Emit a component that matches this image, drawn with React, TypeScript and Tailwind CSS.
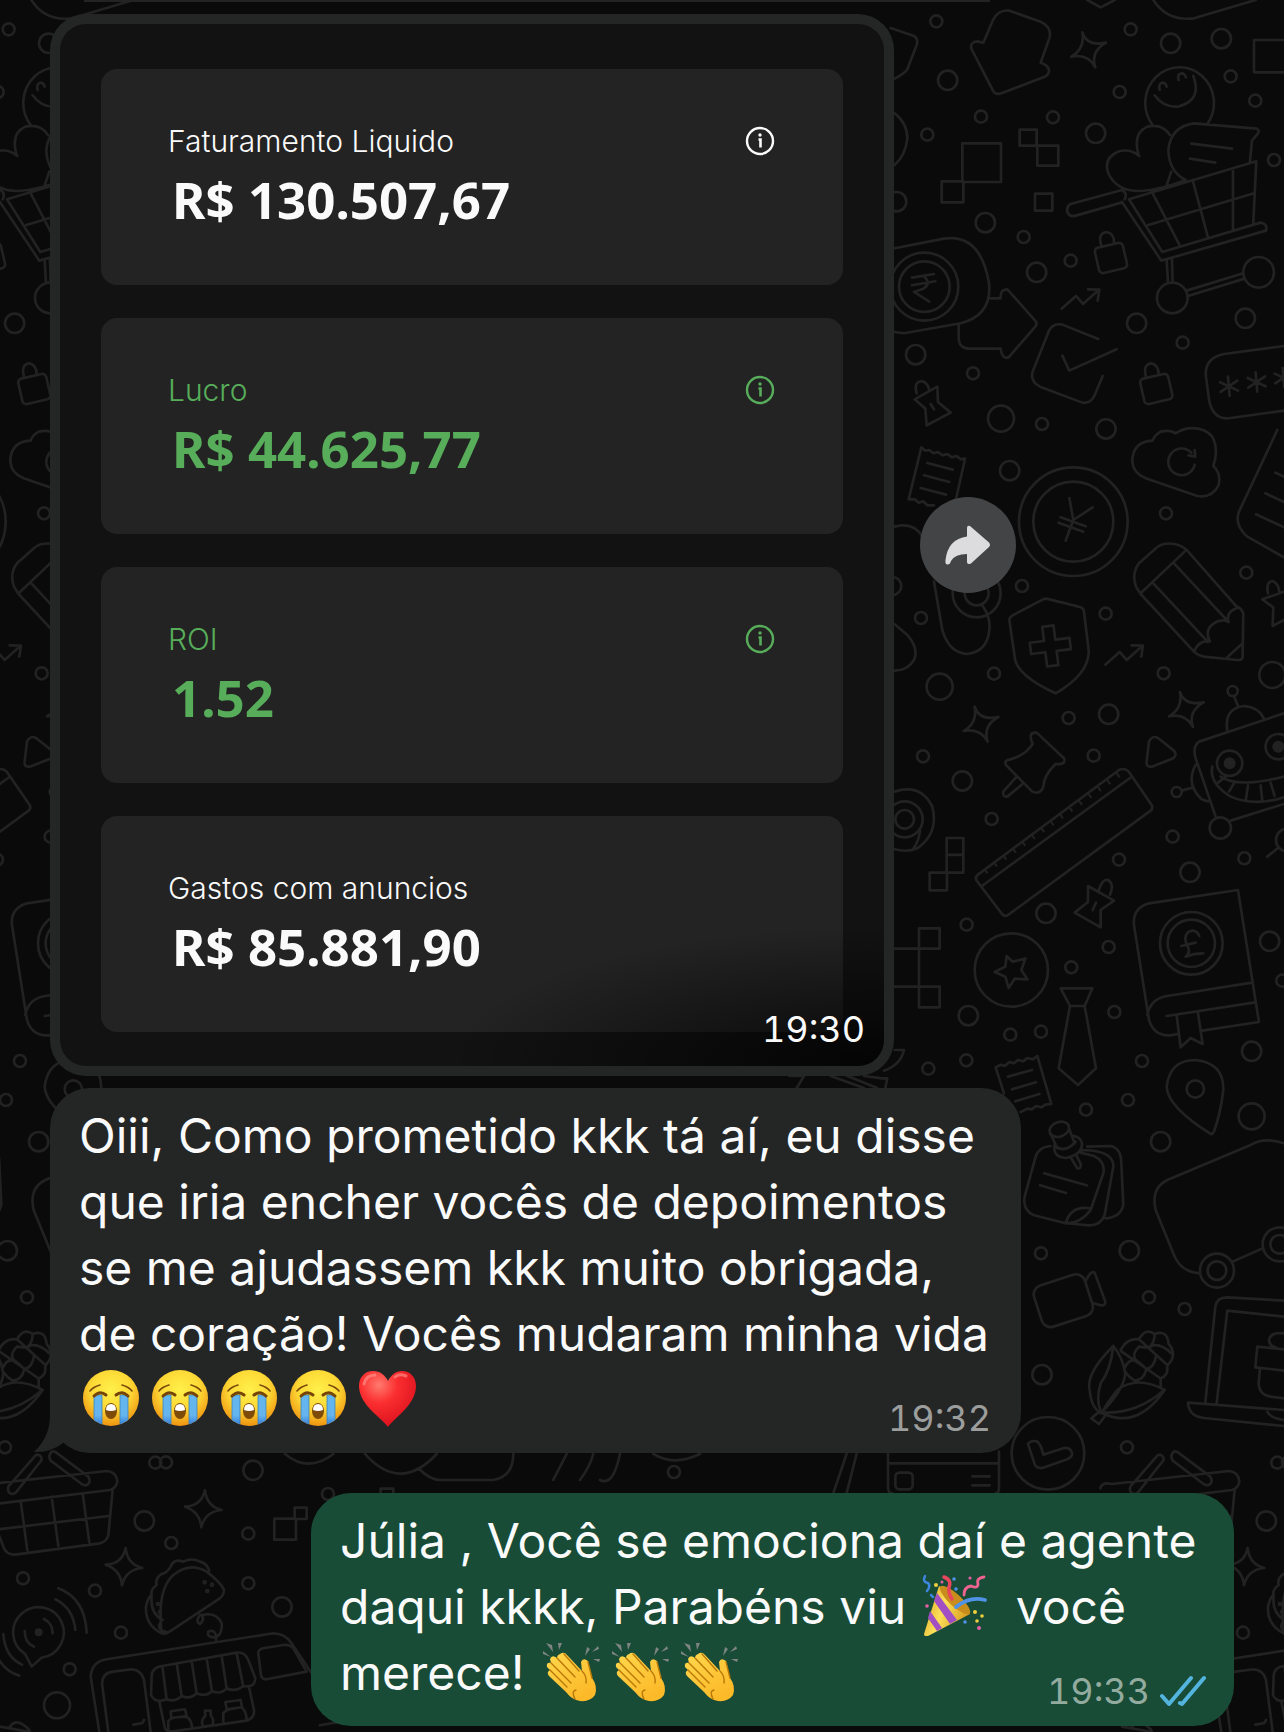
import type { ReactNode } from 'react'

type Dot = [number, number, number]

interface DoodleProps {
  origin: string
  dots: Dot[]
  d: string
  children?: ReactNode
}

// One block of the wallpaper, drawn at three times its final size
function Doodle({ origin, dots, d, children }: DoodleProps) {
  return (
    <g transform={`translate(${origin}) scale(0.3333)`}>
      {dots.map(([cx, cy, r], i) => (
        <circle key={i} cx={cx} cy={cy} r={r} />
      ))}
      <path d={d} />
      {children}
    </g>
  )
}

const SPARK = 'M595 97Q608 140 666 128Q618 155 634 202Q612 160 562 170Q604 146 595 97Z'
const SPARK_TALL = 'M615 570Q620 620 665 630Q615 635 604 682Q600 635 555 620Q605 618 615 570Z'
const TREND = 'M533 926L576 888L597 912L644 870M612 868L646 869L641 902'

const shopDots: Dot[] = [
  [157, 64, 18], [740, 88, 18], [1040, 229, 18], [1114, 302, 18], [707, 276, 18], [291, 350, 18],
  [507, 352, 18], [130, 404, 18], [1170, 480, 18], [419, 711, 18], [560, 782, 18], [267, 1120, 18],
  [896, 1028, 18], [474, 1272, 18], [191, 241, 29], [860, 130, 29], [1012, 116, 29], [635, 400, 29],
  [304, 668, 29], [458, 817, 29], [95, 1064, 29], [758, 970, 29], [1084, 955, 29], [38, 605, 29],
  [666, 1287, 29], [351, 1256, 39], [865, 894, 46], [1124, 817, 46], [121, 860, 102], [121, 860, 76],
]

const shopPath = [
  'M298 128L326 62Q342 28 376 32L470 65Q503 80 497 112L470 188Q500 198 494 218Q490 228 478 232L352 280Q334 286 327 272L262 146Q258 126 280 124Z',
  'M808 0Q850 65 930 55L1115 0M610 0L650 22L692 0M1200 120H1110V217H1200',
  'M20 84L90 108Q104 115 98 135L70 208Q66 218 32 236M32 340Q70 370 70 415Q65 465 32 495',
  // smiley
  'M806 375A103 107 0 1 1 970 372M812 286Q840 325 885 319Q955 300 928 228M827 270Q822 248 838 248Q846 250 848 260M884 240Q878 220 896 220Q902 222 906 232',
  // heart and speech bubble
  'M766 468Q740 445 705 454Q655 475 674 522Q700 575 770 573Q830 570 905 540M764 466Q745 400 790 380Q835 370 858 405M848 556L862 515',
  'M905 540Q855 515 853 450Q860 380 930 370L1118 386Q1128 392 1122 400L1104 422L1098 484M922 431L1044 446M918 476L994 488',
  // cart
  'M735 598L1117 484L1108 668M805 578L888 738M926 540L972 712M1047 505V690M793 675L1110 580M735 598L835 756L1130 668Q1152 672 1146 692L832 782L714 606',
  'M714 570L560 612Q545 622 551 638Q558 652 575 647L712 608M714 570Q732 580 722 598M848 780L852 848M864 778L866 848M908 872L1078 820M912 888L1082 836',
  'M235 430h116v116h-116zM173 544h65v63h-65zM407 389h51v48h-51zM460 437h63v60h-63zM453 581h52v51h-52z',
  'M652 736Q640 700 668 696Q690 700 690 726M786 1130Q776 1094 802 1090Q824 1096 824 1122',
  // wallet and rupee
  'M32 745L180 716Q290 700 315 850Q325 945 230 970L60 1000L32 996M84 833L150 822M84 856L154 844M118 828Q145 850 118 866L90 876L136 905',
  'M318 895H350Q348 868 370 868L456 965Q460 972 454 980L374 1072Q355 1080 350 1046H260Q224 1048 224 1010V972',
  'M643 1017L535 974Q508 968 495 992L446 1115Q438 1145 468 1160L595 1208Q620 1212 632 1186L656 1128M535 1067L556 1112L698 1048',
  'M98 1180Q88 1142 116 1144Q132 1150 136 1172M92 1198L160 1160L162 1206L200 1238L128 1276L124 1226ZM140 1212L150 1228',
  // password field
  'M1200 1038L1020 1062Q960 1075 966 1130L976 1205Q990 1262 1040 1254L1200 1232',
  'M1032 1130L1037 1188M1008 1147L1062 1172M1010 1176L1060 1142M1115 1117L1120 1175M1091 1134L1145 1159M1093 1163L1143 1129M1196 1104L1201 1162M1172 1121L1226 1146M1174 1150L1224 1116',
  SPARK,
  TREND,
].join('')

const toolDots: Dot[] = [
  [846, 250, 18], [1087, 428, 18], [665, 551, 18], [414, 468, 18], [111, 564, 18], [330, 731, 18],
  [839, 730, 18], [554, 864, 18], [629, 977, 18], [117, 979, 18], [323, 1167, 18], [866, 1220, 18],
  [705, 1289, 18], [1081, 1285, 18], [1046, 783, 15], [878, 1086, 15], [377, 122, 29], [167, 770, 39],
  [1165, 735, 39], [674, 853, 29], [235, 1053, 29], [25, 468, 27], [568, 275, 163], [568, 275, 120],
  [1009, 1194, 32], [1037, 1000, 38], [1183, 950, 38], [62, 1168, 54], [62, 1168, 28], [278, 490, 72],
  [278, 490, 36], [1210, 1230, 34],
]

const toolPath = [
  // receipt
  'M112 52L124 62L136 60L148 70L162 66L176 76L190 72L204 82L218 78L230 88L243 86L212 226M112 52L74 208L92 208L104 218L118 214L130 226L150 226M130 99L206 119M120 136L196 156M110 174L186 194',
  'M556 204L568 270L626 232M568 270L545 332M530 262L605 289M524 278L598 305',
  // cloud
  'M806 32Q745 35 745 95Q748 130 785 145L940 198Q985 205 1004 165Q1012 130 988 108Q1005 60 985 20Q960 -10 910 -5Q890 0 874 10Q860 -2 830 5Q812 15 806 32M932 104A40 40 0 1 1 922 68M932 60L934 80L914 76',
  'M1180 0L1065 245Q1050 285 1090 320L1200 382M1174 128L1200 140M1144 190L1200 216M1116 253L1200 292',
  // pencil
  'M908 360Q880 335 840 342Q825 345 810 360L765 400Q742 430 756 470L770 492L930 665Q940 676 960 680L1060 690Q1076 690 1076 680L1078 550Q1070 532 1058 530L908 360M770 490L905 362M808 460L972 636M870 400L1034 576',
  'M930 665Q945 630 978 634Q960 600 990 580Q1010 565 1034 576Q1024 545 1062 533M1030 682L1076 640',
  // shield
  'M485 506Q515 512 590 532Q600 536 600 545L614 660Q618 730 515 790Q395 735 392 680L376 570Q376 562 386 556L470 512Q480 506 485 506Z',
  // push pin and play
  'M446 942Q430 905 458 908L540 985Q548 1005 515 1002Q480 1035 478 1070Q470 1095 445 1085L366 1005Q358 990 380 988Q425 975 446 942ZM398 1040L358 1085Q355 1102 370 1100L418 1060',
  'M795 935Q805 915 822 924L870 962Q880 975 868 985L805 1010Q785 1012 788 995Z',
  // ruler
  'M705 1020Q722 1012 735 1026L803 1125Q808 1135 800 1142L372 1455Q362 1462 354 1452L278 1352Q272 1342 282 1334ZM738 1044L294 1368',
  // robot
  'M1050 798L1062 828M1030 902Q1020 835 1080 828Q1125 832 1140 866M1200 850L945 935Q925 950 935 985L995 1160M1040 1172L1200 1122M935 1005Q905 1060 950 1105Q960 1112 972 1114M893 1082L922 1074',
  'M985 1010Q975 1060 1040 1100Q1110 1130 1200 1102M1010 1040Q1060 1075 1200 1040M1000 1060L1025 1040M1035 1085L1050 1060M1086 1108L1092 1066M1135 1112L1130 1066M1172 1098L1160 1058',
  'M32 1085Q110 1060 145 1130Q165 1210 100 1255Q70 1268 32 1258M108 1200Q105 1235 88 1256M188 1224h50v104h-50zM188 1275h50',
  'M32 290Q90 275 115 320M150 455L175 600Q195 670 250 672Q310 665 316 600Q320 560 296 528M32 583L70 615Q105 655 90 690Q70 722 32 722M1150 1280L1182 1254',
  'M1152 490Q1145 452 1168 454Q1184 462 1186 485M1200 485L1135 508L1168 532L1166 588L1200 570',
].join('')

const officeDots: Dot[] = [
  [248, 194, 18], [674, 261, 18], [562, 322, 18], [691, 456, 18], [379, 524, 18], [471, 515, 18],
  [247, 601, 18], [133, 626, 18], [774, 603, 18], [732, 720, 18], [606, 749, 18], [471, 1180, 18],
  [1195, 362, 18], [486, 160, 29], [918, 37, 29], [1157, 244, 29], [253, 467, 29], [1103, 574, 29],
  [830, 845, 29], [736, 1172, 29], [1103, 769, 39], [382, 330, 110], [922, 250, 94], [922, 250, 71],
  [934, 687, 26], [999, 1232, 51], [999, 1232, 28], [1187, 1153, 51], [1187, 1153, 28],
]

const officePath = [
  'M612 78L690 122L650 150L650 202L572 158L612 126ZM644 92Q655 55 672 60Q692 72 678 104M636 128L626 150',
  'M368 288L386 305L424 296L412 330L430 358L392 356L374 384L364 350L332 336L364 320Z',
  'M137 38h52v53h-52zM105 205h62v61h-62zM105 380h62v62h-62zM105 266V380M32 266H105M32 380H105',
  // tie
  'M530 385H625L602 438H558ZM558 438L524 625L582 675L636 625L602 438',
  // book
  'M882 522L860 526Q810 530 795 480L750 195Q745 145 795 130L1062 90L1125 486L955 512M790 465Q800 415 850 408L1104 368M848 468L1114 427M878 466L890 562L920 534L956 552L942 458',
  'M946 228Q935 205 915 215Q895 230 912 262Q920 280 905 290Q930 280 958 280M892 258L935 248',
  'M980 822Q850 740 848 680Q858 600 934 600Q1020 608 1018 690Q1010 760 990 815Q985 824 980 822Z',
  'M360 700L335 622L350 614L362 618L376 606L390 610L402 600L418 604L430 594L446 598L460 588L502 732L484 734L472 742L456 738L444 748L430 746L410 756M372 650L444 630M384 688L456 667M394 724L466 702',
  // sticky notes
  'M500 858Q465 860 455 890L422 1010Q415 1050 450 1066L545 1090Q590 1090 620 1050L658 940Q665 905 630 888L590 878M500 822L520 865M556 808L572 850M512 855Q505 890 545 894Q595 885 594 850Q590 832 570 828M516 860Q545 880 575 845M560 892L580 925Q592 928 590 912L576 884',
  'M480 940L608 976M468 976L546 999M545 1090Q560 1035 620 1045M590 870Q690 870 688 920L662 1065Q650 1098 610 1096L550 1090M610 860L680 858Q712 865 712 910L718 1035Q710 1072 665 1075',
  'M1200 850Q1140 830 1100 855L850 960Q800 985 815 1050L870 1185Q890 1235 945 1240M1046 1205L1134 1166',
  'M32 570H60Q50 615 0 632M0 655L10 655L4 684',
  // pieces under the left side of the image bubble
  'M-284 648H-240L-262 684M-160 648L-60 684M-110 648L-20 684M-60 648L0 656',
].join('')

const farmDots: Dot[] = [
  [795, 172, 18], [902, 207, 18], [729, 622, 18], [1180, 668, 18], [474, 404, 29], [492, 640, 109],
]

const farmPath = [
  'M605 124Q620 90 632 98L664 185Q664 198 650 196L628 190',
  'M432 612Q440 600 458 604Q470 610 478 644L540 624Q560 622 564 640Q566 650 550 658L475 684Q458 686 452 672Z',
  // corn
  'M688 318Q605 400 617 450Q620 500 650 520Q720 450 724 400Q715 350 688 318M688 318Q680 390 650 430Q635 480 650 512M842 450Q760 405 700 450Q660 500 655 520Q760 570 842 450M660 518Q760 520 838 452M650 512L622 535L645 552L665 525',
  'M710 330Q730 292 765 298Q785 262 812 282Q850 268 854 312Q875 335 862 362Q848 378 850 384Q852 405 830 416V442M712 334L828 414M765 298L850 375M812 282Q812 305 800 318Q830 308 862 340M722 384Q735 355 758 362Q740 345 765 320Q790 325 804 318M758 362Q790 385 786 392Q778 420 752 422Q735 412 722 394M816 348Q812 380 788 388',
  // laptop and gift
  'M1200 182L1030 172Q998 172 994 200L964 488M1200 230L1030 212L998 490M1200 510L912 488Q915 530 960 534L1200 558M1150 515Q1160 535 1200 540',
  'M1200 328L1120 320L1114 382L1200 392M1128 385L1124 430Q1125 465 1160 470L1200 475M1200 280Q1160 275 1155 300Q1158 320 1175 322',
  'M12 635V740Q12 760 25 760M345 635V745Q345 760 335 760M12 670H345M265 709h52M265 736h52',
].join('')

const streetDots: Dot[] = [
  [498, 487, 18], [745, 701, 18], [514, 729, 18], [69, 835, 18], [285, 872, 18], [745, 850, 18],
  [363, 998, 18], [209, 1108, 18], [984, 582, 18], [2022, 516, 18], [759, 511, 29], [433, 663, 29],
  [846, 921, 29], [171, 1216, 39], [614, 847, 3], [636, 854, 3], [622, 873, 3], [474, 912, 3], [480, 936, 3],
]

const streetPath = [
  // basket
  'M108 465L25 560Q20 580 38 582Q46 580 50 575L125 480Q125 462 108 465M148 472Q150 450 165 455L265 530Q275 550 258 556Q250 556 245 552L152 482Z',
  'M-65 565Q-60 545 -30 552L320 513Q350 515 352 545Q348 565 330 570L0 610L-50 614M338 570L325 705Q320 725 300 730L45 764Q20 764 12 745L-40 612M62 602L82 752M155 590L175 738M248 580L268 728M-20 690L325 648',
  SPARK_TALL,
  'M823 656h65v63h-65zM884 623h36v34h-36zM1142 566h38v30h-38z',
  // taco
  'M485 1000Q470 870 520 825Q570 785 620 815Q665 850 672 870Q672 888 655 898L510 994Q495 1004 485 1000Q435 975 438 920Q445 890 455 885Q450 870 470 855Q465 835 485 822Q500 820 512 800Q520 775 550 785Q575 772 600 785Q620 790 628 812M455 890Q450 940 488 960M480 970Q470 990 500 996',
  'M600 945Q585 965 600 972Q615 960 605 945Q650 935 665 970Q668 1010 640 1012Q620 1010 625 995Q650 985 648 1020',
  // voice waves
  'M75 1062L95 1100L125 1073A76 76 0 1 0 75 1062M132 957Q158 970 158 1000M74 993Q75 1030 102 1040M166 898Q220 925 226 990M175 865Q255 895 260 998M10 1003Q15 1070 66 1094M-20 1040Q0 1110 58 1127',
  // food truck
  'M298 1296L272 1130Q275 1085 320 1078L820 1000Q855 1000 875 1030L935 1120M325 1296L306 1150Q308 1118 340 1115L395 1108Q425 1110 432 1140L452 1296M400 1274L425 1270Q430 1266 432 1260',
  'M487 1098Q455 1102 455 1130L453 1185Q466 1212 500 1198Q524 1208 545 1188Q570 1200 590 1180Q616 1192 636 1174Q662 1184 680 1166Q708 1176 730 1158Q765 1165 766 1135L745 1080Q735 1055 710 1058L487 1098L500 1198M530 1090L545 1188M575 1083L590 1180M620 1076L636 1174M665 1068L680 1166M710 1060L730 1160',
  'M478 1205L495 1285Q500 1296 520 1294L740 1262Q765 1255 762 1230L748 1165M775 1060Q775 1048 790 1045L850 1035Q870 1033 880 1045L920 1115L800 1138Q785 1138 783 1125ZM512 1234L555 1228L560 1248L514 1254ZM505 1290V1264Q510 1254 530 1252L560 1250Q574 1260 576 1280M676 1206L722 1200L726 1222L680 1228ZM670 1268V1240Q676 1230 690 1228L724 1222Q738 1230 740 1258M615 1232H632L632 1245Q645 1262 636 1276L610 1280Q600 1262 616 1248Z',
  'M0 1280L90 1296M30 1280Q50 1250 88 1290',
  // pieces between the bubbles
  'M855 462Q925 520 1000 462M1095 462Q1200 580 1310 462M1255 505Q1290 540 1320 540H1480Q1540 530 1540 462M1660 540L1700 462M1740 540Q1770 500 1780 462M1800 540Q1840 560 1860 462M1960 462Q2020 500 2100 462M2500 580L2540 462M2540 580L2570 462',
  'M960 1276L1040 1262',
].join('')

function Wallpaper() {
  return (
    <svg className="absolute inset-0 h-full w-full" aria-hidden="true">
      <defs>
        <g id="doodles" fill="none" stroke="#222222" strokeWidth="8" strokeLinecap="round" strokeLinejoin="round">
          <Doodle origin="884 0" dots={shopDots} d={shopPath}>
            <rect x="638" y="735" width="86" height="78" rx="12" transform="rotate(-13 681 774)" />
            <rect x="774" y="1128" width="86" height="78" rx="12" transform="rotate(-13 817 1167)" />
          </Doodle>
          <Doodle origin="884 430" dots={toolDots} d={toolPath}>
            <path d="M482 588h34v43h43v34h-43v43h-34v-43h-43v-34h43z" transform="rotate(-7 499 648)" />
            <path d={SPARK} transform="translate(-323 733)" />
            <path d={SPARK} transform="translate(293 689)" />
            <path d={TREND} transform="translate(131 -222)" />
            <path d="M705 1034L300 1328" strokeWidth="16" strokeDasharray="6 29" strokeLinecap="butt" />
            <circle cx="1037" cy="1000" r="14" fill="#222222" />
            <circle cx="1183" cy="950" r="14" fill="#222222" />
          </Doodle>
          <Doodle origin="884 860" dots={officeDots} d={officePath}>
            <ellipse cx="526" cy="808" rx="30" ry="22" transform="rotate(-20 526 808)" />
          </Doodle>
          <Doodle origin="884 1240" dots={farmDots} d={farmPath}>
            <rect x="458" y="117" width="160" height="130" rx="28" transform="rotate(-18 538 182)" />
            <rect x="34" y="698" width="52" height="50" rx="12" />
          </Doodle>
          <Doodle origin="0 1300" dots={streetDots} d={streetPath}>
            <path d={SPARK_TALL} transform="translate(-238 174)" />
            <circle cx="116" cy="997" r="8" fill="#222222" />
          </Doodle>
        </g>
      </defs>
      <use href="#doodles" />
      <use href="#doodles" x="-1122" />
      <use href="#doodles" x="1122" />
    </svg>
  )
}

function EmojiDefs() {
  return (
    <svg className="absolute h-0 w-0" aria-hidden="true">
      <defs>
        <radialGradient id="face" cx="0.5" cy="0.35" r="0.65">
          <stop offset="0" stopColor="#fff04a" />
          <stop offset="0.55" stopColor="#fdd835" />
          <stop offset="1" stopColor="#ee9411" />
        </radialGradient>
        <linearGradient id="tear" x1="0" y1="0" x2="0" y2="1">
          <stop offset="0" stopColor="#62b6ee" />
          <stop offset="0.6" stopColor="#66b4ee" />
          <stop offset="1" stopColor="#1c66cf" />
        </linearGradient>
        <radialGradient id="heart" cx="0.35" cy="0.25" r="0.8">
          <stop offset="0" stopColor="#ff7a6e" />
          <stop offset="0.4" stopColor="#fb2f30" />
          <stop offset="1" stopColor="#d90f1c" />
        </radialGradient>
        <linearGradient id="hand" x1="0" y1="0" x2="0.6" y2="1">
          <stop offset="0" stopColor="#ffd84e" />
          <stop offset="1" stopColor="#fcb928" />
        </linearGradient>
        <linearGradient id="cone" x1="0" y1="0" x2="1" y2="0.4">
          <stop offset="0" stopColor="#d99a1c" />
          <stop offset="0.5" stopColor="#fbe05a" />
          <stop offset="1" stopColor="#dca021" />
        </linearGradient>
        <clipPath id="face-clip">
          <circle cx="32" cy="31" r="28" />
        </clipPath>
      </defs>
    </svg>
  )
}

function Emoji({ label, children }: { label: string; children: ReactNode }) {
  return (
    <svg viewBox="0 0 69 62" role="img" aria-label={label} className="inline-block h-[62px] w-[69px] align-[-12px]">
      {children}
    </svg>
  )
}

function Crying() {
  return (
    <Emoji label="chorando">
      <circle cx="32" cy="31" r="28" fill="url(#face)" />
      <g clipPath="url(#face-clip)" fill="url(#tear)" stroke="#3d83b9" strokeWidth="0.8">
        <path d="M15 28h8v34h-8zM41 28h8v34h-8z" />
      </g>
      <path d="M11 24Q14 20 21 18M53 24Q50 20 43 18" fill="none" stroke="#7a4a0c" strokeWidth="1.6" strokeLinecap="round" />
      <path d="M15 29Q21 23 27 28M37 28Q43 23 49 29" fill="none" stroke="#754406" strokeWidth="3" strokeLinecap="round" />
      <ellipse cx="32" cy="44" rx="6" ry="8" fill="#7f4b08" />
      <path d="M27 43Q27 37 32 37T37 43Q32 45 27 43Z" fill="#fff" />
    </Emoji>
  )
}

function Heart() {
  return (
    <Emoji label="coração">
      <path
        d="M33 60C27 51 4 38 4 19C4 10 10 4 18 4C25 4 30 8 33 14C36 8 41 4 47 4C55 4 61 10 61 19C61 38 39 51 33 60Z"
        fill="url(#heart)"
      />
      <path d="M9 17Q11 8 20 8M40 10Q44 6 51 9" fill="none" stroke="#ff9a90" strokeWidth="3" strokeLinecap="round" opacity="0.6" />
    </Emoji>
  )
}

function PartyPopper() {
  return (
    <Emoji label="festa">
      <path d="M4 60L19 12Q31 20 50 40L8 62Q4 63 4 60Z" fill="url(#cone)" />
      <path d="M14 27L30 50L37 46L17 19ZM8 44L17 57L22 54L10 37Z" fill="#a24fc4" />
      <ellipse cx="35" cy="26" rx="20" ry="6" transform="rotate(43 35 26)" fill="#c98d1c" />
      <path d="M5 2Q2 8 8 9Q11 12 7 17M11 21L13 23" fill="none" stroke="#3f86e0" strokeWidth="2.5" strokeLinecap="round" />
      <path d="M24 3Q32 6 29 13Q28 19 32 25" fill="none" stroke="#e8465c" strokeWidth="3.5" strokeLinecap="round" />
      <path d="M64 3Q56 4 58 10Q58 15 51 12Q44 13 44 21" fill="none" stroke="#ef6390" strokeWidth="2.8" strokeLinecap="round" />
      <path d="M36 33Q50 22 65 26" fill="none" stroke="#4f92e6" strokeWidth="3.8" strokeLinecap="round" />
      <g fill="#e45fa3">
        <circle cx="22" cy="8" r="1.5" />
        <circle cx="50" cy="4" r="1.6" />
        <circle cx="7" cy="32" r="1.8" />
        <circle cx="59" cy="54" r="2" />
      </g>
      <g fill="#f0cf3c">
        <circle cx="16" cy="11" r="2" />
        <circle cx="55" cy="38" r="2" />
        <circle cx="62" cy="42" r="1.8" />
        <circle cx="57" cy="47" r="1.8" />
      </g>
      <g fill="#4f92e6">
        <circle cx="34" cy="5" r="1.8" />
        <circle cx="36" cy="15" r="1.8" />
        <circle cx="45" cy="48" r="1.8" />
      </g>
    </Emoji>
  )
}

function Clap() {
  return (
    <Emoji label="palmas">
      <g fill="#7f8583">
        <path d="M8 3L14 5L15 12ZM5 11L13 17L5 14ZM20 3L24 3L21 10ZM47 16L49 7L52 9ZM54 12L60 6L61 9ZM55 19L62 19L61 22Z" />
      </g>
      <path
        d="M22 14Q26 11 29 15L44 31L43 22Q45 17 50 21L54 38Q60 46 57 55Q52 62 42 61Q34 60 28 52L11 36Q8 32 12 30L9 27Q8 22 13 23L12 19Q14 14 19 18Q19 15 22 14Z"
        fill="url(#hand)"
      />
      <path
        d="M19 18L37 37M13 23L33 43M12 30L29 47M26 14L41 31M50 22L54 38M44 31Q49 36 48 43M37 59Q33 51 38 50"
        fill="none"
        stroke="#b97808"
        strokeWidth="1.4"
        strokeLinecap="round"
      />
    </Emoji>
  )
}

function InfoIcon() {
  return (
    <svg viewBox="0 0 30 30" className="h-[30px] w-[30px]" fill="none" stroke="currentColor" aria-hidden="true">
      <circle cx="15" cy="15" r="13" strokeWidth="2.4" />
      <path d="M13.500 13.500H15.500V21.500" strokeWidth="2.600" />
      <circle cx="15" cy="9" r="1.700" fill="currentColor" stroke="none" />
    </svg>
  )
}

interface Metric {
  label: string
  value: string
  positive?: boolean
  info?: boolean
}

const metrics: Metric[] = [
  { label: 'Faturamento Liquido', value: 'R$ 130.507,67', info: true },
  { label: 'Lucro', value: 'R$ 44.625,77', positive: true, info: true },
  { label: 'ROI', value: '1.52', positive: true, info: true },
  { label: 'Gastos com anuncios', value: 'R$ 85.881,90' },
]

function MetricCard({ label, value, positive, info }: Metric) {
  return (
    <div
      className={`flex h-[216px] items-start justify-between rounded-2xl bg-[#232323] pt-[52px] pr-[68px] pl-[67px] ${
        positive ? 'text-[#57ad5a]' : 'text-[#fafafa]'
      }`}
    >
      <dl>
        <dt className="text-[30px] leading-[40px] font-light">{label}</dt>
        <dd className="pl-1 font-['Noto_Sans',sans-serif] text-[51px] leading-[76px] font-bold">{value}</dd>
      </dl>
      {info && (
        <button type="button" aria-label={`Sobre ${label}`} className="mt-[5px]">
          <InfoIcon />
        </button>
      )}
    </div>
  )
}

export default function App() {
  return (
    <main className="relative min-h-screen overflow-hidden bg-[#0a0a0a] font-['Inter',sans-serif] text-[#fafafa]">
      <Wallpaper />
      <EmojiDefs />
      <div className="relative flex flex-col">
        <div className="ml-[84px] h-[2px] w-[906px] max-w-full bg-[#222424]" />

        <div className="mt-3 ml-[50px] flex items-center gap-[26px]">
          <article className="w-[844px] rounded-[36px] bg-[#242626] p-[10px]">
            <div className="relative flex flex-col gap-[33px] overflow-hidden rounded-[26px] bg-[#121212] px-[41px] pt-[45px] pb-[34px]">
              {metrics.map((metric) => (
                <MetricCard key={metric.label} {...metric} />
              ))}
              <div className="absolute inset-0 bg-[radial-gradient(ellipse_440px_140px_at_100%_100%,rgba(0,0,0,0.8),transparent)]" />
              <time className="absolute right-[19px] bottom-[15px] text-[36px] leading-[44px] tabular-nums">19:30</time>
            </div>
          </article>
          <button
            type="button"
            aria-label="Encaminhar"
            className="flex h-24 w-24 items-center justify-center rounded-full bg-[#434446]"
          >
            <svg viewBox="0 0 46 40" className="h-10 w-[46px]" fill="#dcdcde" aria-hidden="true">
              <path d="M22 3Q22 0 25 1L44 17.500Q46 20 44 22L26 38.500Q22 40 22 37V29Q10 29 6 36Q5 40 2 39.500Q0 39 0.500 35Q3 14 22 11.500Z" />
            </svg>
          </button>
        </div>

        <article className="relative mt-3 ml-[50px] w-[971px] max-w-full rounded-[40px] bg-[#242626] px-[29px] pt-[15px] pb-5">
          <svg viewBox="0 0 50 60" className="absolute bottom-0 -left-[16px] h-[60px] w-[50px]" fill="#242626" aria-hidden="true">
            <path d="M16 0V22Q16 44 0 59Q16 60 29 50L50 40V0Z" />
          </svg>
          <p className="relative text-[48px] leading-[66px] whitespace-nowrap">
            Oiii, Como prometido kkk tá aí, eu disse
            <br />
            que iria encher vocês de depoimentos
            <br />
            se me ajudassem kkk muito obrigada,
            <br />
            de coração! Vocês mudaram minha vida
            <br />
            <Crying />
            <Crying />
            <Crying />
            <Crying />
            <Heart />
          </p>
          <time className="absolute right-[30px] bottom-[13px] text-[36px] leading-[44px] text-[#9c9d9d] tabular-nums">19:32</time>
        </article>

        <article className="relative mt-10 mr-[50px] w-[923px] max-w-full self-end rounded-[40px] bg-[#184c37] px-[29px] pt-[15px] pb-5">
          <p className="text-[48px] leading-[66px] whitespace-nowrap">
            Júlia , Você se emociona daí e agente
            <br />
            daqui kkkk, Parabéns viu <PartyPopper />
            {'\u00a0 '}você
            <br />
            merece! <Clap />
            <Clap />
            <Clap />
          </p>
          <div className="absolute right-7 bottom-[13px] flex items-center gap-[10px] text-[36px] leading-[44px] text-[#93ab9f] tabular-nums">
            <time>19:33</time>
            <svg
              viewBox="0 0 46 32"
              className="h-8 w-[46px]"
              fill="none"
              stroke="#53b4de"
              strokeWidth="4"
              strokeLinecap="round"
              strokeLinejoin="round"
              role="img"
              aria-label="lida"
            >
              <path d="M2 21L9 29L31 3M20 28L22 29L44 3" />
            </svg>
          </div>
        </article>
      </div>
    </main>
  )
}
